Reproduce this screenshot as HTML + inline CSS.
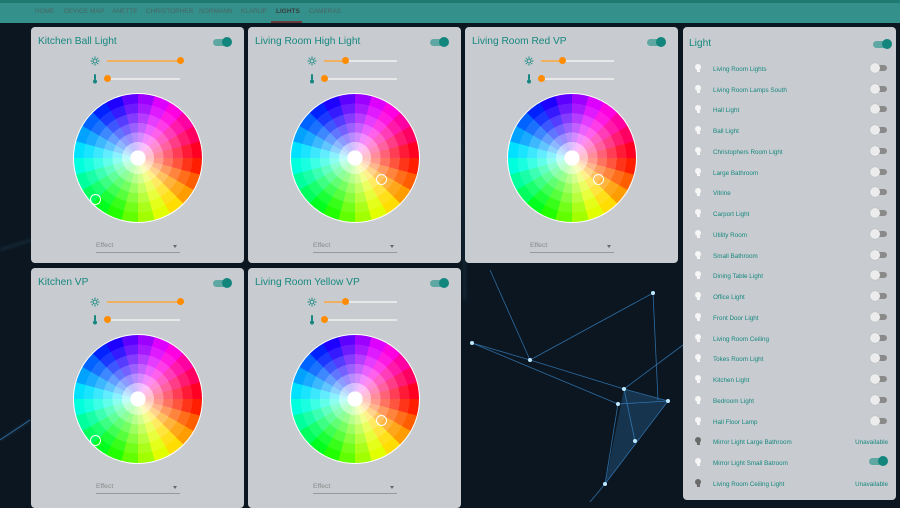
<!DOCTYPE html>
<html><head><meta charset="utf-8"><style>
*{margin:0;padding:0;box-sizing:border-box}
body{width:900px;height:502px;overflow:hidden;background:#0b1620;font-family:"Liberation Sans",sans-serif;position:relative}
.bg{position:absolute;left:0;top:0}
.top{position:absolute;left:0;top:0;width:900px;height:23px;background:#33908a;border-top:3px solid #1f7a72}
.nav{position:absolute;top:8px;font-size:6.5px;color:#4b6664}
.nav.act{color:#3a3f3f;font-weight:bold}
.ul{position:absolute;left:271px;top:21px;width:31px;height:2px;background:#6a3a3a}
.card{position:absolute;width:213px;background:rgba(208,212,215,.96);border-radius:4px}
.title{position:absolute;left:7px;top:9px;font-size:10.2px;color:#17877f}
.tg{position:absolute;width:17px;height:7px;border-radius:4px;background:#5fa7a2}
.tg::after{content:"";position:absolute;right:-2px;top:-2px;width:10px;height:10px;border-radius:50%;background:#12857c}
.tgo{position:absolute;width:15px;height:6px;border-radius:3px;background:#8a8a8a}
.tgo::after{content:"";position:absolute;left:-2px;top:-2px;width:10px;height:10px;border-radius:50%;background:#ececec;box-shadow:0 0 1px #999}
.trk{position:absolute;left:76px;width:73px;height:2px;background:#e8e8e8}
.fill{position:absolute;left:0;top:0;height:2px;background:#f0b060}
.th{position:absolute;top:-3px;width:7px;height:7px;border-radius:50%;background:#ff8c00;margin-left:-3.5px}
.ico{position:absolute}
.wheel{position:absolute;left:42px;top:66px;width:130px;height:130px;border-radius:50%;border:1.5px solid #fff;
background:radial-gradient(circle closest-side,#fff 0 12%,rgba(255,255,255,.75) 12% 25%,rgba(255,255,255,.55) 25% 40%,rgba(255,255,255,.38) 40% 55%,rgba(255,255,255,.24) 55% 70%,rgba(255,255,255,.1) 70% 85%,rgba(255,255,255,0) 85%),
conic-gradient(from 90deg,hsl(7,100%,50%) 0 15deg,hsl(22,100%,50%) 0 30deg,hsl(37,100%,50%) 0 45deg,hsl(52,100%,50%) 0 60deg,hsl(67,100%,50%) 0 75deg,hsl(82,100%,50%) 0 90deg,hsl(97,100%,50%) 0 105deg,hsl(112,100%,50%) 0 120deg,hsl(127,100%,50%) 0 135deg,hsl(142,100%,50%) 0 150deg,hsl(157,100%,50%) 0 165deg,hsl(172,100%,50%) 0 180deg,hsl(187,100%,50%) 0 195deg,hsl(202,100%,50%) 0 210deg,hsl(217,100%,50%) 0 225deg,hsl(232,100%,50%) 0 240deg,hsl(247,100%,50%) 0 255deg,hsl(262,100%,50%) 0 270deg,hsl(277,100%,50%) 0 285deg,hsl(292,100%,50%) 0 300deg,hsl(307,100%,50%) 0 315deg,hsl(322,100%,50%) 0 330deg,hsl(337,100%,50%) 0 345deg,hsl(352,100%,50%) 0 360deg)}
.mk{position:absolute;width:11px;height:11px;border-radius:50%;border:1px solid #fff;margin:-5.5px 0 0 -5.5px}
.eff{position:absolute;left:65px;top:215px;width:84px;height:11px;border-bottom:1px solid #999;font-size:6.8px;color:#888}
.eff::after{content:"";position:absolute;right:3px;top:3px;border:2.5px solid transparent;border-top:3px solid #666}
.row{position:absolute;left:0;width:213px;height:20px}
.row .n{position:absolute;left:30px;top:3px;font-size:6.3px;color:#17877f}
.row .b{position:absolute;left:12px;top:1px;width:6px;height:6px;border-radius:50%;background:#f6f6f6}
.row .b::after{content:"";position:absolute;left:1.5px;top:5px;width:3px;height:3px;background:#f6f6f6}
.row .b.d,.row .b.d::after{background:#6a6a6a}
.row .u{position:absolute;right:8px;top:3px;font-size:6.3px;color:#17877f}
.row .tgo{right:9px;top:2px}
.row .tg{right:10px;top:1px}
</style></head><body>
<svg class="bg" width="900" height="502">
<defs><filter id="bl"><feGaussianBlur stdDeviation="1.5"/></filter></defs>
<g stroke="#5aa8d8" stroke-width="1" fill="none" opacity=".35" filter="url(#bl)">
<line x1="0" y1="250" x2="31" y2="240"/><line x1="0" y1="440" x2="31" y2="420"/><line x1="462" y1="120" x2="465" y2="300"/>
</g>
<g stroke="#3a8fd8" stroke-width="0.8" fill="none" opacity=".7">
<line x1="472" y1="343" x2="530" y2="360"/><line x1="530" y1="360" x2="624" y2="389"/><line x1="472" y1="343" x2="618" y2="404"/>
<line x1="530" y1="360" x2="653" y2="293"/><line x1="624" y1="389" x2="668" y2="401"/><line x1="618" y1="404" x2="668" y2="401"/>
<line x1="624" y1="389" x2="635" y2="441"/><line x1="618" y1="404" x2="605" y2="484"/><line x1="668" y1="401" x2="605" y2="484"/>
<line x1="624" y1="389" x2="683" y2="345"/><line x1="653" y1="293" x2="658" y2="400"/><line x1="490" y1="270" x2="530" y2="360"/>
<line x1="605" y1="484" x2="590" y2="502"/><line x1="0" y1="440" x2="30" y2="420"/>
</g>
<polygon points="624,389 668,401 605,484" fill="#3a8fd8" opacity=".25"/>
<g fill="#bfe9ff"><circle cx="472" cy="343" r="2"/><circle cx="530" cy="360" r="2"/><circle cx="624" cy="389" r="2"/><circle cx="618" cy="404" r="2"/><circle cx="668" cy="401" r="2"/><circle cx="635" cy="441" r="2"/><circle cx="605" cy="484" r="2"/><circle cx="653" cy="293" r="2"/></g>
</svg>
<div class="top"></div>
<span class="nav" style="left:35px">HOME</span><span class="nav" style="left:64px">DEVICE MAP</span><span class="nav" style="left:112px">ANETTE</span><span class="nav" style="left:146px">CHRISTOPHER</span><span class="nav" style="left:199px">NORMANN</span><span class="nav" style="left:241px">KLARUP</span><span class="nav act" style="left:276px">LIGHTS</span><span class="nav" style="left:309px">CAMERAS</span>
<div class="ul"></div>

<svg width="0" height="0" style="position:absolute"><defs>
<g id="sun" stroke="#17877f" stroke-width="1" fill="none"><circle cx="5" cy="5" r="2"/><path d="M5 0.5v1.5M5 8v1.5M0.5 5h1.5M8 5h1.5M1.8 1.8l1 1M7.2 7.2l1 1M1.8 8.2l1-1M7.2 2.8l1-1"/></g>
<g id="thm" fill="#17877f"><rect x="2" y="0" width="2" height="6" rx="1"/><circle cx="3" cy="7.5" r="2"/></g>
</defs></svg>

<div class="card" style="left:31px;top:27px;height:236px">
<div class="title">Kitchen Ball Light</div><div class="tg" style="left:182px;top:12px"></div>
<svg class="ico" style="left:59px;top:29px" width="10" height="10"><use href="#sun"/></svg><div class="trk" style="top:33px"><div class="fill" style="width:73px"></div><div class="th" style="left:73px"></div></div>
<svg class="ico" style="left:61px;top:47px" width="6" height="10"><use href="#thm"/></svg><div class="trk" style="top:51px"><div class="th" style="left:0"></div></div>
<div class="wheel"></div><div class="mk" style="left:64px;top:172px"></div><div class="eff">Effect</div></div>

<div class="card" style="left:248px;top:27px;height:236px">
<div class="title">Living Room High Light</div><div class="tg" style="left:182px;top:12px"></div>
<svg class="ico" style="left:59px;top:29px" width="10" height="10"><use href="#sun"/></svg><div class="trk" style="top:33px"><div class="fill" style="width:21px"></div><div class="th" style="left:21px"></div></div>
<svg class="ico" style="left:61px;top:47px" width="6" height="10"><use href="#thm"/></svg><div class="trk" style="top:51px"><div class="th" style="left:0"></div></div>
<div class="wheel"></div><div class="mk" style="left:133px;top:152px"></div><div class="eff">Effect</div></div>

<div class="card" style="left:465px;top:27px;height:236px">
<div class="title">Living Room Red VP</div><div class="tg" style="left:182px;top:12px"></div>
<svg class="ico" style="left:59px;top:29px" width="10" height="10"><use href="#sun"/></svg><div class="trk" style="top:33px"><div class="fill" style="width:21px"></div><div class="th" style="left:21px"></div></div>
<svg class="ico" style="left:61px;top:47px" width="6" height="10"><use href="#thm"/></svg><div class="trk" style="top:51px"><div class="th" style="left:0"></div></div>
<div class="wheel"></div><div class="mk" style="left:133px;top:152px"></div><div class="eff">Effect</div></div>

<div class="card" style="left:31px;top:268px;height:240px">
<div class="title">Kitchen VP</div><div class="tg" style="left:182px;top:12px"></div>
<svg class="ico" style="left:59px;top:29px" width="10" height="10"><use href="#sun"/></svg><div class="trk" style="top:33px"><div class="fill" style="width:73px"></div><div class="th" style="left:73px"></div></div>
<svg class="ico" style="left:61px;top:47px" width="6" height="10"><use href="#thm"/></svg><div class="trk" style="top:51px"><div class="th" style="left:0"></div></div>
<div class="wheel"></div><div class="mk" style="left:64px;top:172px"></div><div class="eff">Effect</div></div>

<div class="card" style="left:248px;top:268px;height:240px">
<div class="title">Living Room Yellow VP</div><div class="tg" style="left:182px;top:12px"></div>
<svg class="ico" style="left:59px;top:29px" width="10" height="10"><use href="#sun"/></svg><div class="trk" style="top:33px"><div class="fill" style="width:21px"></div><div class="th" style="left:21px"></div></div>
<svg class="ico" style="left:61px;top:47px" width="6" height="10"><use href="#thm"/></svg><div class="trk" style="top:51px"><div class="th" style="left:0"></div></div>
<div class="wheel"></div><div class="mk" style="left:133px;top:152px"></div><div class="eff">Effect</div></div>

<div class="card" style="left:683px;top:27px;height:473px">
<div class="title" style="left:6px;top:11px">Light</div><div class="tg" style="left:190px;top:14px"></div>
<div class="row" style="top:36px"><div class="b"></div><div class="n">Living Room Lights</div><div class="tgo"></div></div>
<div class="row" style="top:57px"><div class="b"></div><div class="n">Living Room Lamps South</div><div class="tgo"></div></div>
<div class="row" style="top:77px"><div class="b"></div><div class="n">Hall Light</div><div class="tgo"></div></div>
<div class="row" style="top:98px"><div class="b"></div><div class="n">Ball Light</div><div class="tgo"></div></div>
<div class="row" style="top:119px"><div class="b"></div><div class="n">Christophers Room Light</div><div class="tgo"></div></div>
<div class="row" style="top:140px"><div class="b"></div><div class="n">Large Bathroom</div><div class="tgo"></div></div>
<div class="row" style="top:160px"><div class="b"></div><div class="n">Vitrine</div><div class="tgo"></div></div>
<div class="row" style="top:181px"><div class="b"></div><div class="n">Carport Light</div><div class="tgo"></div></div>
<div class="row" style="top:202px"><div class="b"></div><div class="n">Utility Room</div><div class="tgo"></div></div>
<div class="row" style="top:223px"><div class="b"></div><div class="n">Small Bathroom</div><div class="tgo"></div></div>
<div class="row" style="top:243px"><div class="b"></div><div class="n">Dining Table Light</div><div class="tgo"></div></div>
<div class="row" style="top:264px"><div class="b"></div><div class="n">Office Light</div><div class="tgo"></div></div>
<div class="row" style="top:285px"><div class="b"></div><div class="n">Front Door Light</div><div class="tgo"></div></div>
<div class="row" style="top:306px"><div class="b"></div><div class="n">Living Room Ceiling</div><div class="tgo"></div></div>
<div class="row" style="top:326px"><div class="b"></div><div class="n">Tokes Room Light</div><div class="tgo"></div></div>
<div class="row" style="top:347px"><div class="b"></div><div class="n">Kitchen Light</div><div class="tgo"></div></div>
<div class="row" style="top:368px"><div class="b"></div><div class="n">Bedroom Light</div><div class="tgo"></div></div>
<div class="row" style="top:389px"><div class="b"></div><div class="n">Hall Floor Lamp</div><div class="tgo"></div></div>
<div class="row" style="top:409px"><div class="b d"></div><div class="n">Mirror Light Large Bathroom</div><div class="u">Unavailable</div></div>
<div class="row" style="top:430px"><div class="b"></div><div class="n">Mirror Light Small Batroom</div><div class="tg"></div></div>
<div class="row" style="top:451px"><div class="b d"></div><div class="n">Living Room Ceiling Light</div><div class="u">Unavailable</div></div>
</div>
</body></html>
